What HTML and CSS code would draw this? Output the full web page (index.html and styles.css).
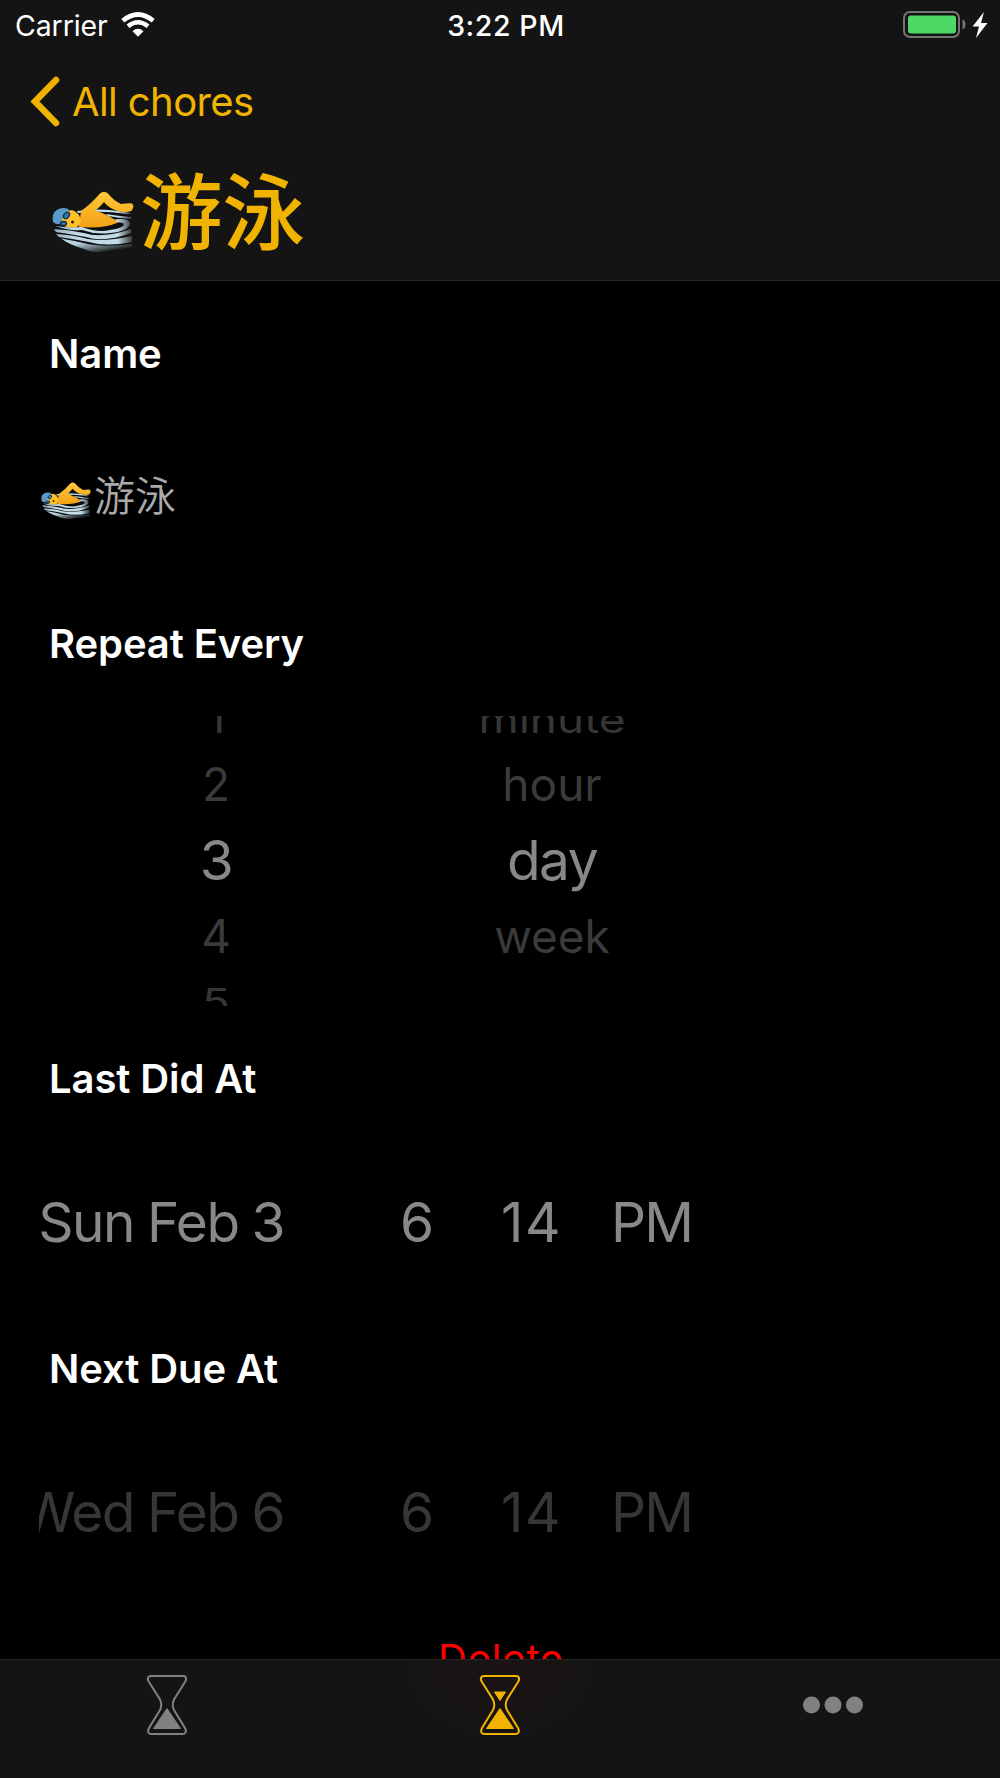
FILE: index.html
```html
<!DOCTYPE html>
<html lang="en">
<head>
  <meta charset="UTF-8">
  <meta name="viewport" content="width=device-width, initial-scale=1.0">
  <title>All chores</title>
  <link rel="stylesheet" href="styles.css">
</head>
<body>

  <!-- Shared icons -->
  <svg class="defs" width="0" height="0">
    <defs>
      <linearGradient id="skin" x1="0" y1="0" x2="0" y2="1">
        <stop offset="0" stop-color="#ffc93c"/>
        <stop offset="1" stop-color="#f3a114"/>
      </linearGradient>
      <linearGradient id="water" gradientUnits="userSpaceOnUse" x1="0" y1="0" x2="82" y2="0">
        <stop offset="0" stop-color="#8fabb8"/>
        <stop offset="0.3" stop-color="#c3dbe6"/>
        <stop offset="0.8" stop-color="#c3dbe6"/>
        <stop offset="1" stop-color="#c3dbe6" stop-opacity="0.1"/>
      </linearGradient>
      <linearGradient id="foam" x1="0" y1="0" x2="1" y2="1">
        <stop offset="0.3" stop-color="#b9d3df"/>
        <stop offset="0.85" stop-color="#b9d3df" stop-opacity="0"/>
      </linearGradient>
      <symbol id="swimmer" viewBox="0 0 82 62">
        <path d="M25 20Q48 14 78 19V41Q65 50 38 52Q14 48 2 37Z" fill="#0b0f12"/>
        <g fill="url(#water)">
          <path d="M25 20Q50 16 79 22Q78 24 74 23Q50 19 26 22Z"/>
          <path d="M54 23Q66 25 79 26V28Q66 27 56 25Z"/>
          <path d="M60 29Q78 26 78 33Q77 40 58 42Q44 44 30 39Q16 40 3 35Q16 37 30 36Q46 42 58 39Q72 37 72 33Q71 31 61 31Z"/>
          <path d="M2 38Q18 39 32 42Q50 48 79 38V42Q52 52 34 46Q18 43 4 41Z"/>
          <path d="M4 43Q22 44 36 48Q52 51 80 45V51Q54 56 37 51Q22 48 7 46Z"/>
        </g>
        <path d="M9 47.5Q24 50 38 53.5Q54 56 80 53V57Q60 59 46 61Q38 61 32 58Q18 54 9 47.5Z" fill="url(#foam)"/>
        <path d="M27 35L29 20Q40 12 48 2.5Q52 -1 56 2.500Q62 10 69 13Q76 12 80 12.500Q83 15 79.500 20Q74 22 68 20.500Q57 18 52 11Q47 17 43 19.500Q58 24 66 31.500Q52 38 27 36Z" fill="url(#skin)"/>
        <path d="M9 22L20 19Q27 21 29 29Q28 36 23 36.500Q14 37 8 33Z" fill="#ffc02a"/>
        <path d="M1 31Q-1 20 8 17.500Q14 16 18 19.500Q11 23 9 33Q4 34 1 31Z" fill="#5b9bc9"/>
        <ellipse cx="14.500" cy="24.500" rx="3.500" ry="2.600" fill="#2e78b5" stroke="#142d42" stroke-width="1.300" transform="rotate(-50 14.500 24.500)"/>
        <ellipse cx="11.500" cy="32.500" rx="3" ry="2" fill="#2e78b5" stroke="#142d42" stroke-width="1.300"/>
        <circle cx="20.500" cy="31" r="1.500" fill="#3f1a0c"/>
      </symbol>
      <symbol id="hourglass" viewBox="0 0 42 62">
        <path d="M5 2H37Q40 2 40.2 5Q40 6.5 39 8L28 25.5Q25.5 31 28 36L39 54Q40.5 57 39.5 58.5Q38.5 60 37 60H5Q3.5 60 2.5 58.5Q1.5 57 3 54L14 36Q16.5 31 14 25.5L3 8Q2 6.5 1.8 5Q2 2 5 2Z" fill="none" stroke="currentColor" stroke-width="2"/>
        <path d="M21 34.5L34.5 54.5H7.5Z" fill="currentColor" stroke="currentColor" stroke-linejoin="round"/>
      </symbol>
    </defs>
  </svg>

  <header class="header">
    <div class="status-bar">
      <div class="carrier">
        <span>Carrier</span>
        <svg class="wifi" width="34" height="25" viewBox="0 0 34 25" fill="none" stroke="#fff" stroke-width="4.6">
          <path d="M1.8 8.7Q17 -3.7 32.2 8.7"/>
          <path d="M7 14.2Q17 6.3 27 14.2"/>
          <path d="M11.5 19.2Q17 14.4 22.5 19.2L17 24.7Z" fill="#fff" stroke="none"/>
        </svg>
      </div>
      <div class="clock">3:22 PM</div>
      <svg class="battery" width="86" height="28" viewBox="0 0 86 28">
        <rect x="1" y="1" width="55" height="25" rx="6" fill="none" stroke="#757575" stroke-width="2"/>
        <rect x="5" y="4.5" width="48" height="18" rx="3" fill="#4cd964"/>
        <path d="M59.5 8.5Q62.5 9.5 62.5 13.5T59.5 18.5Z" fill="#757575"/>
        <path d="M81 1L69.5 15.5H76L73 27L84.5 12H78Z" fill="#fff"/>
      </svg>
    </div>

    <a class="back" href="#">
      <svg width="30" height="51" viewBox="0 0 30 51" fill="none" stroke="currentColor" stroke-width="6.5" stroke-linecap="round">
        <path d="M26 4L5 25.5L26 47"/>
      </svg>
      <span>All chores</span>
    </a>

    <h1 class="title">
      <svg class="title-icon" width="82" height="62"><use href="#swimmer"/></svg>
      <span>游泳</span>
    </h1>
  </header>

  <main class="content">
    <h2 class="section">Name</h2>
    <div class="row name">
      <svg class="name-icon" width="50" height="38"><use href="#swimmer"/></svg>
      <span>游泳</span>
    </div>

    <h2 class="section">Repeat Every</h2>
    <div class="picker">
      <ul class="wheel">
        <li class="far">1</li>
        <li class="near">2</li>
        <li class="selected">3</li>
        <li class="near">4</li>
        <li class="far">5</li>
      </ul>
      <ul class="wheel">
        <li class="far">minute</li>
        <li class="near">hour</li>
        <li class="selected">day</li>
        <li class="near">week</li>
        <li class="far"></li>
      </ul>
    </div>

    <h2 class="section">Last Did At</h2>
    <div class="row date">
      <span class="day">Sun Feb 3</span>
      <span class="hour">6</span>
      <span class="minute">14</span>
      <span class="period">PM</span>
    </div>

    <h2 class="section">Next Due At</h2>
    <div class="row date disabled">
      <span class="day">Wed Feb 6</span>
      <span class="hour">6</span>
      <span class="minute">14</span>
      <span class="period">PM</span>
    </div>

    <div class="delete">Delete</div>
  </main>

  <nav class="tab-bar">
    <a class="tab" href="#">
      <svg width="42" height="62"><use href="#hourglass"/></svg>
    </a>
    <a class="tab active" href="#">
      <svg width="42" height="62" viewBox="0 0 42 62">
        <use href="#hourglass"/>
        <path d="M15.5 18H26.5L21 26.5Z" fill="currentColor" stroke="currentColor" stroke-linejoin="round"/>
      </svg>
    </a>
    <a class="tab" href="#">
      <svg width="62" height="62" viewBox="0 0 62 62" fill="currentColor">
        <circle cx="9.5" cy="31" r="8.5"/>
        <circle cx="31" cy="31" r="8.5"/>
        <circle cx="52.5" cy="31" r="8.5"/>
      </svg>
    </a>
  </nav>

</body>
</html>
```
FILE: styles.css
```css
* {
  box-sizing: border-box;
}

body {
  font-family: Inter, 'Noto Sans CJK SC', sans-serif;
  font-size: 40px;
  margin: 0;
  background-color: #000;
  color: #fff;
  height: 1778px;
  display: flex;
  flex-direction: column;
  overflow: hidden;
}

a {
  text-decoration: none;
}

.defs {
  flex: none;
}

/* Header */
.header {
  flex: none;
  height: 281px;
  background-color: #141414;
  border-bottom: 1px solid #282828;
  color: #f0b400;
}

.status-bar {
  display: grid;
  grid-template-columns: 1fr auto 1fr;
  align-items: center;
  height: 51px;
  padding: 0 10px 0 15px;
  color: #fff;
  font-size: 28.5px;
}

.carrier {
  display: flex;
  align-items: center;
  gap: 13px;
  letter-spacing: -0.1px;
}

.wifi {
  margin-top: -3px;
}

.clock {
  padding-left: 7px;
  font-weight: 500;
  letter-spacing: 0.6px;
}

.battery {
  justify-self: end;
  margin: -1px 1px 0 0;
}

.back {
  display: flex;
  align-items: center;
  gap: 12px;
  height: 101px;
  padding-left: 30px;
  color: inherit;
  letter-spacing: -0.6px;
}

.title {
  display: flex;
  align-items: center;
  gap: 6px;
  height: 122px;
  margin: 0;
  padding-left: 52px;
  font-size: 82.5px;
  font-weight: 500;
  line-height: 1;
}

.title-icon {
  margin-top: 18px;
}

/* Form */
.content {
  flex: 1;
  min-height: 0;
  overflow: hidden;
}

.section {
  display: flex;
  align-items: center;
  height: 145px;
  margin: 0;
  padding-left: 49px;
  font-size: 40px;
  font-weight: 600;
  letter-spacing: -0.1px;
}

.row {
  display: flex;
  align-items: center;
  height: 145px;
}

.name {
  gap: 3px;
  padding: 0 0 11px 41px;
  color: #aaa;
  font-size: 41px;
  font-weight: 350;
}

.name-icon {
  margin-top: 16px;
}

.picker {
  display: flex;
  gap: 46px;
  height: 290px;
  padding-left: 71px;
  overflow: hidden;
}

.wheel {
  display: flex;
  flex-direction: column;
  justify-content: center;
  width: 290px;
  margin: -3px 0 0;
  padding: 0;
  list-style: none;
  text-align: center;
}

.wheel li {
  display: flex;
  flex: none;
  align-items: center;
  justify-content: center;
  height: 76px;
  color: #3a3a3a;
  font-size: 46px;
}

.wheel .far {
  height: 54px;
  color: #363636;
  transform: scaleY(0.8);
}

.wheel .selected {
  color: #888;
  font-size: 55px;
  letter-spacing: -1.5px;
}

.date {
  padding-bottom: 4px;
  color: #888;
  font-size: 55px;
}

.date.disabled {
  color: #363636;
}

.date .day {
  display: flex;
  justify-content: flex-end;
  width: 245px;
  margin-left: 39px;
  overflow: hidden;
  letter-spacing: -1.5px;
  word-spacing: -1px;
  white-space: nowrap;
}

.date .hour {
  width: 150px;
  text-align: right;
}

.date .minute {
  width: 128px;
  letter-spacing: 1.5px;
  text-align: right;
}

.date .period {
  margin-left: 49px;
  letter-spacing: -2px;
}

.delete {
  display: flex;
  align-items: center;
  justify-content: center;
  height: 144px;
  padding-left: 2px;
  color: #f00;
  letter-spacing: 0.8px;
}

/* Tab bar */
.tab-bar {
  display: flex;
  flex: none;
  height: 119px;
  padding: 14px 1px 0 0;
  background: radial-gradient(110px 90px at 500px 0, #1c1313, #141414);
  border-top: 1px solid #282828;
}

.tab {
  flex: 1;
  text-align: center;
  color: #818181;
}

.tab.active {
  color: #f0b400;
}
```
